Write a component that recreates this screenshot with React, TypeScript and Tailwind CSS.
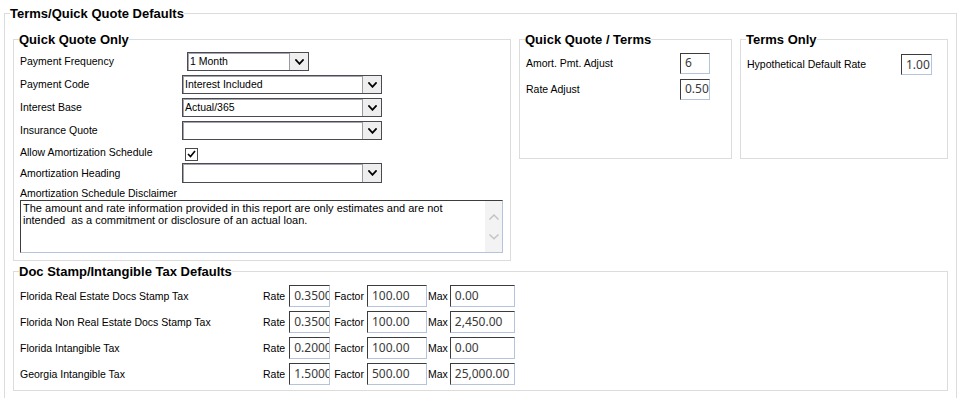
import React from "react";

const LABEL = "font-['Liberation_Sans',Arial,sans-serif] text-[10.5px] leading-[13px] text-black whitespace-nowrap";
const LEGEND = "font-['Liberation_Sans',Arial,sans-serif] text-[13px] font-bold leading-[15px] text-black";

function Chevron({ color = "#000", w = 9, h = 6, sw = 1.8, up = false }: { color?: string; w?: number; h?: number; sw?: number; up?: boolean }) {
  return (
    <svg width={w} height={h} viewBox={`0 0 ${w} ${h}`}>
      <path
        d={up ? `M1 ${h - 1} L${w / 2} 1 L${w - 1} ${h - 1}` : `M1 1 L${w / 2} ${h - 1.2} L${w - 1} 1`}
        stroke={color}
        strokeWidth={sw}
        fill="none"
        strokeLinecap="square"
      />
    </svg>
  );
}

function Select({ value, w, h = "h-[19px]" }: { value?: string; w: string; h?: string }) {
  return (
    <div className={`${w} ${h} flex border border-[#4a4a55] shadow-[inset_1px_1px_0_#a4a4ae] bg-white`}>
      <div className={`flex-1 pl-[2px] flex items-center ${LABEL}`}>{value}</div>
      <div className="w-[19px] h-full border-l border-[#9a9aa2] bg-[#eeeeee] flex items-center justify-center">
        <Chevron />
      </div>
    </div>
  );
}

function TInput({ value, w, h = "h-[22px]" }: { value: string; w: string; h?: string }) {
  return (
    <div
      className={`${w} ${h} shrink-0 border border-t-[#3c3c3c] border-l-[#3c3c3c] border-r-[#b4c4dc] border-b-[#b4c4dc] bg-white overflow-hidden whitespace-nowrap pl-[4px] flex items-center font-['Noto_Sans',sans-serif] text-[12px] text-[#3a3a3a]`}
    >
      {value}
    </div>
  );
}

function Row({ label, h, children }: { label: string; h: string; children: React.ReactNode }) {
  return (
    <div className={`flex items-center ${h}`}>
      <div className={`w-[162px] shrink-0 ${LABEL}`}>{label}</div>
      {children}
    </div>
  );
}

function TaxRow({ label, rate, factor, max }: { label: string; rate: string; factor: string; max: string }) {
  return (
    <div className="flex items-center h-[26px]">
      <div className={`w-[243px] shrink-0 ${LABEL}`}>{label}</div>
      <span className={LABEL}>Rate</span>
      <div className="ml-[4px]">
        <TInput value={rate} w="w-[41px]" />
      </div>
      <span className={`ml-[4px] ${LABEL}`}>Factor</span>
      <div className="ml-[3px]">
        <TInput value={factor} w="w-[60px]" />
      </div>
      <span className={`ml-[1px] ${LABEL}`}>Max</span>
      <div className="ml-[2px]">
        <TInput value={max} w="w-[65px]" />
      </div>
    </div>
  );
}

export default function App() {
  return (
    <div className="w-[962px] h-[398px] overflow-hidden bg-white pt-[6px] pl-[4px] pr-[5px]">
      <fieldset className="border border-[#dcdcdc] pl-[5px] pr-[8px] pt-[11px] pb-[10px]">
        <legend className={LEGEND}>Terms/Quick Quote Defaults</legend>
        <div className="pl-[3px] flex flex-col">
          <div className="flex items-start gap-[8px]">
            {/* Quick Quote Only */}
            <fieldset className="w-[498px] shrink-0 border border-[#dcdcdc] pl-[5px] pr-[5px] pt-[3px] pb-[7px]">
              <legend className={LEGEND}>Quick Quote Only</legend>
              <div className="pl-px flex flex-col">
                <Row label="Payment Frequency" h="h-[23px]">
                  <div className="ml-[5px]">
                    <Select value="1 Month" w="w-[122px]" />
                  </div>
                </Row>
                <Row label="Payment Code" h="h-[23px]">
                  <Select value="Interest Included" w="w-[200px]" />
                </Row>
                <Row label="Interest Base" h="h-[23px]">
                  <Select value="Actual/365" w="w-[200px]" />
                </Row>
                <Row label="Insurance Quote" h="h-[23px]">
                  <Select w="w-[200px]" />
                </Row>
                <Row label="Allow Amortization Schedule" h="h-[21px]">
                  <div className="ml-[3px] mt-[3px] w-[13px] h-[13px] border border-[#4a4a4a] bg-white flex items-center justify-center">
                    <svg width="9" height="8" viewBox="0 0 9 8">
                      <path d="M1 4 L3.5 6.5 L8 1" stroke="#000" strokeWidth="1.6" fill="none" />
                    </svg>
                  </div>
                </Row>
                <Row label="Amortization Heading" h="h-[20px]">
                  <Select w="w-[200px]" h="h-[20px]" />
                </Row>
                <div className={`mt-[4px] ${LABEL}`}>Amortization Schedule Disclaimer</div>
                <div className="w-[483px] h-[53px] flex border border-t-[#3c3c3c] border-l-[#3c3c3c] border-r-[#b4c4dc] border-b-[#b4c4dc] bg-white">
                  <div className="flex-1 pl-[2px] pt-[1px] font-['Liberation_Sans',Arial,sans-serif] text-[11px] leading-[12px] text-black whitespace-pre-wrap">
                    {"The amount and rate information provided in this report are only estimates and are not\nintended  as a commitment or disclosure of an actual loan."}
                  </div>
                  <div className="w-[17px] h-full bg-[#f3f3f3] flex flex-col items-center justify-center gap-[14px]">
                    <Chevron color="#c4c4c4" w={10} h={6} sw={1.5} up />
                    <Chevron color="#c4c4c4" w={10} h={6} sw={1.5} />
                  </div>
                </div>
              </div>
            </fieldset>

            {/* Quick Quote / Terms */}
            <fieldset className="w-[213px] h-[127px] shrink-0 border border-[#dcdcdc] pl-[6px] pr-[5px] pt-[3px]">
              <legend className={`-ml-px ${LEGEND}`}>Quick Quote / Terms</legend>
              <div className="flex items-center h-[26px]">
                <div className={`w-[154px] shrink-0 ${LABEL}`}>Amort. Pmt. Adjust</div>
                <TInput value="6" w="w-[30px]" h="h-[21px]" />
              </div>
              <div className="flex items-center h-[26px]">
                <div className={`w-[154px] shrink-0 ${LABEL}`}>Rate Adjust</div>
                <TInput value="0.50" w="w-[30px]" h="h-[21px]" />
              </div>
            </fieldset>

            {/* Terms Only */}
            <fieldset className="w-[208px] h-[127px] shrink-0 border border-[#dcdcdc] pl-[6px] pr-[5px] pt-[4px]">
              <legend className={`-ml-px ${LEGEND}`}>Terms Only</legend>
              <div className="flex items-center h-[27px]">
                <div className={`w-[154px] shrink-0 ${LABEL}`}>Hypothetical Default Rate</div>
                <TInput value="1.00" w="w-[31px]" h="h-[21px]" />
              </div>
            </fieldset>
          </div>

          {/* Doc Stamp */}
          <fieldset className="mt-[3px] border border-[#dcdcdc] pl-[5px] pr-[5px] pt-[4px] pb-[3px]">
            <legend className={LEGEND}>Doc Stamp/Intangible Tax Defaults</legend>
            <div className="pl-px flex flex-col">
              <TaxRow label="Florida Real Estate Docs Stamp Tax" rate="0.3500" factor="100.00" max="0.00" />
              <TaxRow label="Florida Non Real Estate Docs Stamp Tax" rate="0.3500" factor="100.00" max="2,450.00" />
              <TaxRow label="Florida Intangible Tax" rate="0.2000" factor="100.00" max="0.00" />
              <TaxRow label="Georgia Intangible Tax" rate="1.5000" factor="500.00" max="25,000.00" />
            </div>
          </fieldset>
        </div>
      </fieldset>
    </div>
  );
}
